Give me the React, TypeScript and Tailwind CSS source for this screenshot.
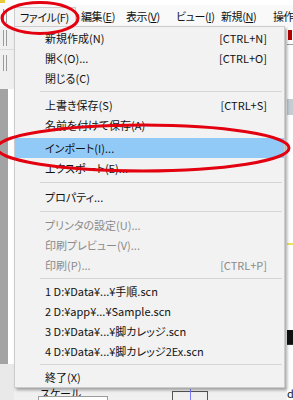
import React from 'react';

type MenuRow =
  | { label: string; shortcut?: string; disabled?: boolean; active?: boolean; gapTop?: boolean }
  | { sep: string };

const fileMenu: MenuRow[] = [
  { label: '新規作成(N)', shortcut: '[CTRL+N]' },
  { label: '開く(O)...', shortcut: '[CTRL+O]' },
  { label: '閉じる(C)' },
  { sep: 'h-[7px]' },
  { label: '上書き保存(S)', shortcut: '[CTRL+S]' },
  { label: '名前を付けて保存(A)' },
  { label: 'インポート(I)...', active: true, gapTop: true },
  { label: 'エクスポート(E)...' },
  { sep: 'h-[9px]' },
  { label: 'プロパティ...' },
  { sep: 'h-[8px]' },
  { label: 'プリンタの設定(U)...', disabled: true },
  { label: '印刷プレビュー(V)...', disabled: true },
  { label: '印刷(P)...', shortcut: '[CTRL+P]', disabled: true },
  { sep: 'h-[6px]' },
  { label: '1 D:¥Data¥...¥手順.scn' },
  { label: '2 D:¥app¥...¥Sample.scn' },
  { label: '3 D:¥Data¥...¥脚カレッジ.scn' },
  { label: '4 D:¥Data¥...¥脚カレッジ2Ex.scn' },
  { sep: 'h-[6px]' },
  { label: '終了(X)' },
];

const Grip = ({ h }: { h: string }) => (
  <div className={`flex gap-[2px] pl-[3px] ${h}`}>
    <div className="w-[1px] h-full bg-[#9a9a9a]" />
    <div className="w-[1px] h-full bg-[#9a9a9a]" />
  </div>
);

const MenuBarItem = ({ w, children, open }: { w: string; children: React.ReactNode; open?: boolean }) => (
  <div
    className={`${w} shrink-0 whitespace-nowrap flex items-center pl-[5px] ${
      open ? 'bg-[#f2f2f2] border-l border-t border-r border-[#cccccc] mt-[2px] z-20' : 'pt-[2px]'
    }`}
  >
    {children}
  </div>
);

export default function App() {
  return (
    <div className="w-[293px] h-[400px] relative overflow-hidden bg-[#f0f0f0] text-[11px] text-[#111] font-['Noto_Sans_CJK_JP','Noto_Sans',sans-serif] [font-feature-settings:'palt']">
      {/* title strip */}
      <div className="h-[5px] bg-white flex">
        <div className="w-[5px] h-[3px] bg-[#e8c93a]" />
      </div>

      {/* menu bar */}
      <div className="h-[21px] bg-[#f9f9f9] flex relative overflow-hidden tracking-[-0.4px]">
        <div className="w-[14px] shrink-0 flex items-center">
          <Grip h="h-[14px]" />
        </div>
        <MenuBarItem w="w-[62px]" open>
          ファイル(F)
        </MenuBarItem>
        <MenuBarItem w="w-[45px]">
          編集(<span className="underline underline-offset-1">E</span>)
        </MenuBarItem>
        <MenuBarItem w="w-[50px]">
          表示(<span className="underline underline-offset-1">V</span>)
        </MenuBarItem>
        <MenuBarItem w="w-[45px]">
          ビュー(<span className="underline underline-offset-1">I</span>)
        </MenuBarItem>
        <MenuBarItem w="w-[52px]">
          新規(<span className="underline underline-offset-1">N</span>)
        </MenuBarItem>
        <MenuBarItem w="w-[40px]">操作</MenuBarItem>
      </div>

      {/* window body */}
      <div className="flex h-[374px]">
        {/* left toolbar strip */}
        <div className="w-[14px] flex flex-col">
          <div className="h-[24px] flex items-center border-b border-[#dcdcdc]">
            <Grip h="h-[16px]" />
          </div>
          <div className="h-[25px] flex items-center">
            <Grip h="h-[16px]" />
          </div>
          <div className="h-[14px]" />
          <div className="flex-1 flex">
            <div className="w-[8px] bg-[#a3a3a3]" />
            <div className="flex-1 bg-white" />
          </div>
          <div className="h-[36px] bg-[#e9e9e9]" />
        </div>

        {/* main area (mostly hidden by the menu) */}
        <div className="flex-1 flex flex-col">
          <div className="flex-1 bg-white" />
          <div className="h-[13px] bg-[#f0f0f0] flex items-start relative">
            <div className="ml-[26px] leading-[12px] text-[11px] whitespace-nowrap">スケール</div>
            <div className="absolute left-[24px] top-[9px] w-[70px] h-[8px] bg-white border border-[#9c9c9c]" />
            <div className="absolute left-[158px] top-[4px] w-[36px] h-[12px] border border-[#555]" />
            <div className="absolute left-[176px] top-[2px] w-[1px] h-[12px] bg-[#7b7bff]" />
          </div>
        </div>

        {/* right strip */}
        <div className="w-[6px] flex flex-col bg-white">
          <div className="h-[18px] flex items-start">
            <div className="ml-[1px] mt-[4px] w-[4px] h-[10px] bg-[#b40000]" />
          </div>
          <div className="h-[1px] bg-[#9a9a9a]" />
          <div className="h-[54px]" />
          <div className="h-[16px] bg-[#c4ccd4]" />
          <div className="h-[128px]" />
          <div className="h-[2px] bg-[#f0e25a]" />
          <div className="h-[85px]" />
          <div className="h-[14px] bg-[#111]" />
          <div className="h-[1px] bg-[#333]" />
          <div className="flex-1 flex items-end text-[11px] leading-[14px]">d</div>
        </div>
      </div>

      {/* dropdown */}
      <div className="absolute left-[14px] top-[26px] w-[271px] bg-[#f2f2f2] border border-[#cccccc] pt-[1px] shadow-[2px_2px_3px_rgba(0,0,0,0.35)] z-10">
        {fileMenu.map((row, i) =>
          'sep' in row ? (
            <div key={i} className={`${row.sep} flex items-center pl-[25px] pr-[2px]`}>
              <div className="h-[1px] w-full bg-[#d5d5d5]" />
            </div>
          ) : (
            <div
              key={i}
              className={`h-[20px] flex items-center justify-between pl-[30px] pr-[17px] ${
                row.gapTop ? 'mt-[3px]' : ''
              } ${row.active ? 'bg-[#91c9f7]' : ''} ${row.disabled ? 'text-[#8a8a8a]' : ''}`}
            >
              <span className="whitespace-nowrap">{row.label}</span>
              {row.shortcut && <span className="whitespace-nowrap">{row.shortcut}</span>}
            </div>
          )
        )}
      </div>

      {/* red annotation ellipses */}
      <svg className="absolute inset-0 z-30 pointer-events-none" width="293" height="400">
        <ellipse cx="40" cy="18" rx="38" ry="15.5" fill="none" stroke="#e3000f" strokeWidth="3" />
        <ellipse cx="143" cy="148" rx="146" ry="23" fill="none" stroke="#e3000f" strokeWidth="3" />
      </svg>
    </div>
  );
}
